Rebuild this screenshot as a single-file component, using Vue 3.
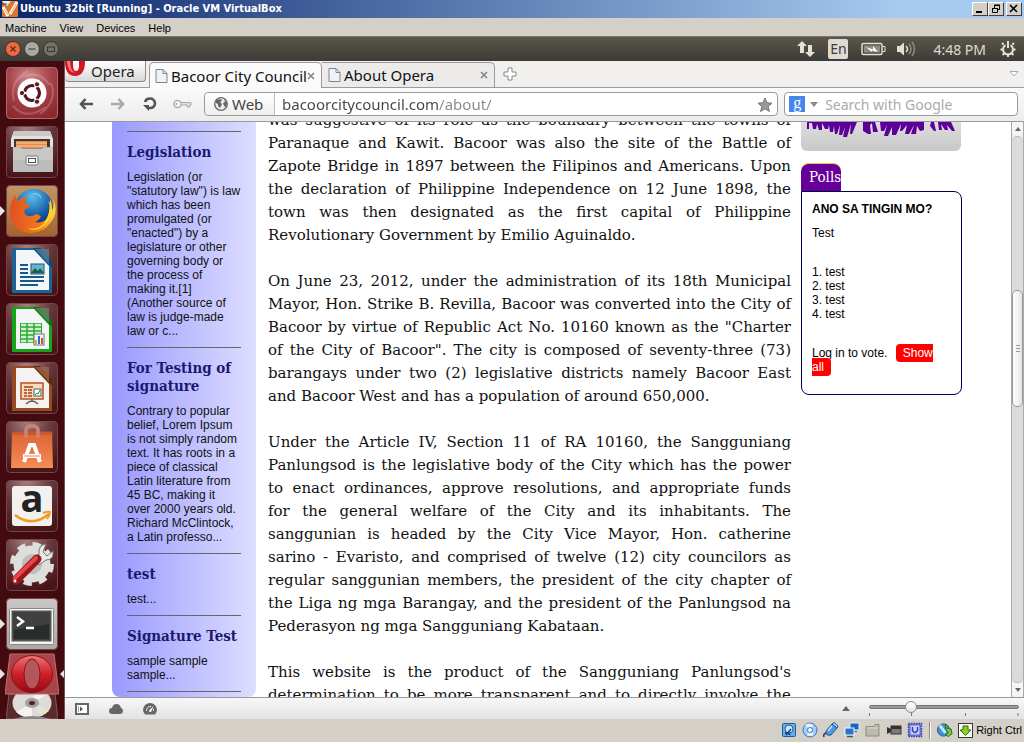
<script setup>
import { ref } from 'vue'

const address = ref('bacoorcitycouncil.com/about/')
const query = ref('')
const zoomLevel = ref(26)

const menus = ['Machine', 'View', 'Devices', 'Help']

const news = [
  {
    title: 'Legislation',
    text: 'Legislation (or "statutory law") is law which has been promulgated (or "enacted") by a legislature or other governing body or the process of making it.[1] (Another source of law is judge-made law or c...',
  },
  {
    title: 'For Testing of signature',
    text: 'Contrary to popular belief, Lorem Ipsum is not simply random text. It has roots in a piece of classical Latin literature from 45 BC, making it over 2000 years old. Richard McClintock, a Latin professo...',
  },
  { title: 'test', text: 'test...' },
  { title: 'Signature Test', text: 'sample sample sample...' },
]

const paragraphs = [
  {
    lines: [
      'was suggestive of its role as the boundary between the towns of',
      'Paranaque and Kawit. Bacoor was also the site of the Battle of',
      'Zapote Bridge in 1897 between the Filipinos and Americans. Upon',
      'the declaration of Philippine Independence on 12 June 1898, the',
      'town was then designated as the first capital of Philippine',
      'Revolutionary Government by Emilio Aguinaldo.',
    ],
  },
  {
    lines: [
      'On June 23, 2012, under the administration of its 18th Municipal',
      'Mayor, Hon. Strike B. Revilla, Bacoor was converted into the City of',
      'Bacoor by virtue of Republic Act No. 10160 known as the "Charter',
      'of the City of Bacoor". The city is composed of seventy-three (73)',
      'barangays under two (2) legislative districts namely Bacoor East',
      'and Bacoor West and has a population of around 650,000.',
    ],
  },
  {
    lines: [
      'Under the Article IV, Section 11 of RA 10160, the Sangguniang',
      'Panlungsod is the legislative body of the City which has the power',
      'to enact ordinances, approve resolutions, and appropriate funds',
      'for the general welfare of the City and its inhabitants. The',
      'sanggunian is headed by the City Vice Mayor, Hon. catherine',
      'sarino - Evaristo, and comprised of twelve (12) city councilors as',
      'regular sanggunian members, the president of the city chapter of',
      'the Liga ng mga Barangay, and the president of the Panlungsod na',
      'Pederasyon ng mga Sangguniang Kabataan.',
    ],
  },
  {
    continues: true,
    lines: [
      "This website is the product of the Sangguniang Panlungsod's",
      'determination to be more transparent and to directly involve the',
    ],
  },
]
</script>

<template>
  <div class="window">
    <header class="titlebar">
      <svg class="vb-icon" width="16" height="16" viewBox="0 0 16 16" aria-hidden="true">
        <rect width="16" height="16" rx="1" fill="#d9772c" />
        <path d="M0 0h9L5 5z" fill="#f2efe9" /><path d="M1 6l5 9M15 1L8 13" stroke="#fff" stroke-width="3" />
        <path d="M2 8l4 6M14 3l-5 9" stroke="#e8a15c" stroke-width="1" /><path d="M0 3h5" stroke="#444" />
      </svg>
      <h1>Ubuntu 32bit [Running] - Oracle VM VirtualBox</h1>
      <div class="win-buttons">
        <button aria-label="Minimize"><svg width="12" height="10"><path d="M2 8h6" stroke="#000" stroke-width="2" /></svg></button>
        <button aria-label="Restore"><svg width="12" height="10"><path d="M4.5 4V1.500h5v4H8M4 1h6M2 4.500h6M2.500 4v4.500h5V4" fill="none" stroke="#000" /></svg></button>
        <button class="close" aria-label="Close"><svg width="12" height="10"><path d="M2 1l7 7M9 1L2 8" stroke="#000" stroke-width="1.600" /></svg></button>
      </div>
    </header>

    <nav class="menubar">
      <button v-for="m in menus" :key="m">{{ m }}</button>
    </nav>

    <div class="panel">
      <div class="panel-controls">
        <button aria-label="Close window"><svg width="16" height="16" viewBox="0 0 16 16"><circle cx="8" cy="8" r="7.500" fill="#ee6a41" stroke="#3a332e" /><path d="M5.500 5.500l5 5M10.500 5.500l-5 5" stroke="#5b2a18" stroke-width="1.200" /></svg></button>
        <button aria-label="Minimize window"><svg width="16" height="16" viewBox="0 0 16 16"><circle cx="8" cy="8" r="7.500" fill="#a9a7a2" stroke="#3a3834" /><path d="M4.500 8h7" stroke="#45433f" stroke-width="1.200" /></svg></button>
        <button aria-label="Unmaximize window"><svg width="16" height="16" viewBox="0 0 16 16"><circle cx="8" cy="8" r="7.500" fill="#75726b" stroke="#3a3834" /><rect x="4.500" y="6" width="7" height="4.500" fill="none" stroke="#393733" /></svg></button>
      </div>
      <div class="indicators">
        <svg width="18" height="16" viewBox="0 0 18 16" fill="#e4e0d8"><path d="M5 0l5 5H7v7H3V5H0zM13 16l-5-5h3V4h4v7h3z" /></svg>
        <span class="lang">En</span>
        <svg class="battery" width="25" height="14" viewBox="0 0 25 14"><rect x="1" y="1.500" width="20" height="11" rx="1.500" fill="none" stroke="#e4e0d8" stroke-width="1.500" /><rect x="3" y="3.500" width="16" height="7" fill="#8f8c84" /><path d="M22 4.500h2v5h-2" fill="none" stroke="#e4e0d8" /><path d="M5 5l7 2.500V4l5 6-6-1.500v1.500z" fill="#fff" /></svg>
        <svg width="20" height="16" viewBox="0 0 20 16"><path d="M0 5h3l4-3.500v13L3 11H0z" fill="#e4e0d8" /><path d="M9 5q3 3 0 6" fill="none" stroke="#e4e0d8" stroke-width="1.500" /><path d="M12 3q4 5 0 10M15 1q5 7 0 14" fill="none" stroke="#8d8a83" stroke-width="1.500" /></svg>
        <time>4:48 PM</time>
        <svg width="16" height="16" viewBox="0 0 16 16" fill="none" stroke="#e4e0d8"><path d="M5.500 4.200a5 5 0 1 0 5 0" stroke-width="2" /><path d="M8 0v7" stroke-width="2" /><path d="M3.500 3.500L2 2M12.500 3.500L14 2M2.800 8.500H.5M13.200 8.500h2.300M4 12.500L2.500 14M12 12.500l1.500 1.500M8 14v2" stroke-width="2" /></svg>
      </div>
    </div>

    <div class="desktop">
      <aside class="launcher" aria-label="Launcher">
        <button class="tile dash" aria-label="Dash">
          <svg viewBox="0 0 52 52"><defs><radialGradient id="dashg" cx="45%" cy="20%" r="85%"><stop offset="0" stop-color="#cf8a8c" /><stop offset=".5" stop-color="#a54349" /><stop offset="1" stop-color="#8c272e" /></radialGradient></defs>
            <rect x=".5" y=".5" width="51" height="51" rx="4" fill="url(#dashg)" stroke="#b2686c" />
            <g fill="none" stroke="#f2d0d0" stroke-opacity=".25" stroke-width="2"><path d="M8 34Q3 14 22 4M45 16Q52 34 34 47M13 12Q30 0 44 18M40 40Q20 54 7 39" /></g>
            <circle cx="26" cy="26" r="14.500" fill="#fff" /><circle cx="26" cy="26" r="7.500" fill="none" stroke="#5c171c" stroke-width="3.200" />
            <path d="M26 26L12 26M26 26l7-13M26 26l7 13" stroke="#fff" stroke-width="2" />
            <g fill="#5c171c" stroke="#fff"><circle cx="16" cy="26" r="2.600" /><circle cx="31" cy="17.300" r="2.600" /><circle cx="31" cy="34.700" r="2.600" /></g>
          </svg>
        </button>
        <button class="tile" aria-label="Files">
          <svg viewBox="0 0 52 52"><path d="M8 5h36l3 8v8H5v-8z" fill="#e2e2e0" /><path d="M8 5h36l2 5H6z" fill="#c9c9c7" /><path d="M8 13h36v9H8z" fill="#4b3023" /><path d="M10 15h31v7H10z" fill="#e5894c" /><path d="M10 17h31M10 20h31" stroke="#f6d5ab" /><path d="M7 21h7l2 2h20l2-2h9v25H7z" fill="#bcbcba" /><path d="M7 22h40v12H7z" fill="#d4d4d2" opacity=".5" /><rect x="20" y="30" width="12" height="9" rx="1.500" fill="#f3f3f1" stroke="#777" /><rect x="22.500" y="32.500" width="7" height="4" fill="#fff" stroke="#555" /></svg>
        </button>
        <button class="tile firefox" aria-label="Firefox">
          <svg viewBox="0 0 52 52"><defs><radialGradient id="globe" cx="45%" cy="20%" r="80%"><stop offset="0" stop-color="#58c0e8" /><stop offset=".6" stop-color="#1a62ae" /><stop offset="1" stop-color="#0c2c68" /></radialGradient><linearGradient id="fox" x2="1"><stop offset="0" stop-color="#e2501e" /><stop offset=".65" stop-color="#f0781e" /><stop offset="1" stop-color="#ffdc3c" /></linearGradient></defs>
            <circle cx="28" cy="23" r="19" fill="url(#globe)" />
            <path d="M9 10l2 6q5-4 11-4-3 3-4 6 4 1 6 2-1 3-5 4-2 5 3 7 4 1 8-2 3 0 5 3-3 4-6 5 10 2 13-6 4-7 0-15 5 4 3 11 4-5 2-14 6 14-2 24-8 12-22 11Q8 46 5 33 2 21 9 10z" fill="url(#fox)" />
            <path d="M44 14q6 15-5 26-9 8-18 3 14 3 19-8 4-6 4-21z" fill="#ffd42e" /><path d="M27 9q6-1 8 4" fill="none" stroke="#a2dced" stroke-width="1.500" opacity=".6" />
          </svg>
          <i class="running" />
        </button>
        <button class="tile" aria-label="Writer">
          <svg viewBox="0 0 52 52"><path d="M6 4h27l13 14v31H6z" fill="#1a6499" /><path d="M27 4h7l12 13v7z" fill="#0c4b78" /><path d="M10 6h18l15 16v24H10z" fill="#f4f5f6" /><path d="M29 5l14 15V5z" fill="#5b859d" opacity=".7" /><path d="M14 21h8M14 25h8M14 29h8M14 33h24M14 37h24M14 41h18" stroke="#155a8a" stroke-width="2" /><rect x="25" y="20" width="13" height="10" fill="#62b4d8" stroke="#1d5470" /><path d="M25 29l4-5 3 3 2-3 4 5z" fill="#225d38" /></svg>
        </button>
        <button class="tile" aria-label="Calc">
          <svg viewBox="0 0 52 52"><path d="M6 4h27l13 14v31H6z" fill="#17a419" /><path d="M27 4h7l12 13v7z" fill="#176a1a" /><path d="M10 6h18l15 16v24H10z" fill="#f4f5f6" /><path d="M29 5l14 15V5z" fill="#649265" opacity=".7" /><path d="M14 20h22v20H14z" fill="#2bab31" /><path d="M15 22h20M15 26h20M15 30h20M15 34h20M15 38h20" stroke="#d3f0d2" stroke-width="2.400" /><path d="M21 20v20M28 20v20" stroke="#2bab31" stroke-width="1.500" /><rect x="28" y="31" width="10" height="11" fill="#f3f3f3" stroke="#777" /><path d="M30 41v-4" stroke="#e6a321" stroke-width="2" /><path d="M33 41v-8" stroke="#2b6bd0" stroke-width="2" /><path d="M36 41v-6" stroke="#d85329" stroke-width="2" /></svg>
        </button>
        <button class="tile" aria-label="Impress">
          <svg viewBox="0 0 52 52"><path d="M6 4h27l13 14v31H6z" fill="#984b20" /><path d="M27 4h7l12 13v7z" fill="#5e290d" /><path d="M10 6h18l15 16v24H10z" fill="#f4f3f1" /><path d="M29 5l14 15V5z" fill="#a06d4e" opacity=".7" /><rect x="15" y="21" width="22" height="16" fill="#fbd9bf" stroke="#b15421" stroke-width="1.500" /><path d="M18 25h9M18 28h3M18 31h3M18 34h3M22 28h4M22 31h4M22 34h4" stroke="#a04519" stroke-width="1.600" /><rect x="28" y="27" width="7" height="7" fill="#fff" stroke="#366f55" /><path d="M29 33l2-2 1 1 2-4" stroke="#2a8452" fill="none" /><path d="M20 42q6-6 12 0M26 37v3" stroke="#666" stroke-width="1.500" fill="none" /></svg>
        </button>
        <button class="tile" aria-label="Software Center">
          <svg viewBox="0 0 52 52"><defs><linearGradient id="bag" y2="1" x2="0"><stop stop-color="#dc6335" /><stop offset="1" stop-color="#f48d56" /></linearGradient></defs><path d="M6 11h40l1 36H5z" fill="url(#bag)" /><path d="M5 14l1-4h40l1 4z" fill="#b95330" opacity=".6" /><path d="M20 17V9q0-4 6-4t6 4v8" fill="none" stroke="#ce8473" stroke-width="3.500" /><path d="M18 41l6-17h4l6 17M17 35h18" fill="none" stroke="#fff" stroke-width="4" /><path d="M18 35h16" stroke="#f0834d" /></svg>
        </button>
        <button class="tile" aria-label="Amazon">
          <svg viewBox="0 0 52 52"><rect x="6" y="6" width="40" height="40" rx="3" fill="#f1f1f0" /><text class="amazon" x="26" y="32" text-anchor="middle">a</text><path d="M9 35q17 13 34-1" fill="none" stroke="#f49a20" stroke-width="2.600" /><path d="M37 33q5-2 7-1 0 3-3 7" fill="none" stroke="#f49a20" stroke-width="2" /></svg>
        </button>
        <button class="tile" aria-label="System Settings">
          <svg viewBox="0 0 52 52"><circle cx="26" cy="25" r="14" fill="none" stroke="#dededc" stroke-width="9" /><circle cx="26" cy="25" r="19.500" fill="none" stroke="#dededc" stroke-width="5" stroke-dasharray="8.200 7.100" /><circle cx="26" cy="25" r="10" fill="#c0bebb" /><path d="M40 5q-8 1-7 10l-5 6 5 5 7-5q8 0 7-9l-6 5-4-4z" fill="#e8e8e6" stroke="#777" /><path d="M31 20L10 41" stroke="#9e1519" stroke-width="9" stroke-linecap="round" /><path d="M30 19L9 39" stroke="#e0484a" stroke-width="4" stroke-linecap="round" /><circle cx="9" cy="42" r="1.500" fill="#eee" /></svg>
        </button>
        <button class="tile terminal" aria-label="Terminal">
          <svg viewBox="0 0 52 52"><rect x="3.500" y="10.500" width="44" height="36" rx="1" fill="#f4f4f3" stroke="#888" /><rect x="6.500" y="13.500" width="38" height="29" fill="#292c2c" stroke="#555" stroke-width="2" /><path d="M8 15h35v11L8 32z" fill="#555" opacity=".5" /><path d="M11 19l6 4.500-6 4.500M20 30h8" fill="none" stroke="#fff" stroke-width="2.400" /></svg>
          <i class="running" />
        </button>
        <button class="folded" aria-label="Opera">
          <svg width="54" height="42" viewBox="0 0 54 42"><defs><linearGradient id="op" y2="1" x2="0"><stop stop-color="#ee7774" /><stop offset=".5" stop-color="#cf2029" /><stop offset="1" stop-color="#900b12" /></linearGradient></defs><path d="M5 1h44l5 40H0z" fill="#a94448" stroke="#bd6e70" /><ellipse cx="27" cy="21" rx="20.500" ry="18.500" fill="url(#op)" stroke="#8f1118" /><ellipse cx="27" cy="21" rx="8" ry="15" fill="#b5565a" stroke="#8f1118" /></svg>
          <i class="running" /><i class="focused" />
        </button>
        <button class="disc" aria-label="Disc">
          <svg width="52" height="25" viewBox="0 0 52 25"><path d="M3 0h46l3 25H0z" fill="#5b2b2c" stroke="#825657" /><ellipse cx="26" cy="9" rx="19.500" ry="15" fill="#dddcda" /><path d="M26 9L10 18q7 6 16 6zM26 9L42 0H28z" fill="#f5f4ef" /><path d="M26 9l17 8-8 5z" fill="#e3e6cf" /><ellipse cx="26" cy="9" rx="7" ry="5" fill="#a4a09e" /><ellipse cx="26" cy="9" rx="3" ry="2" fill="#4c2327" /><path d="M7 25q19-6 38 0z" fill="#888" /></svg>
        </button>
      </aside>

      <section class="browser">
        <div class="tabstrip">
          <button class="opera-menu">
            <svg width="20" height="16" viewBox="0 0 20 16"><path d="M0 0Q0 15 10 15 20 15 20 0h-6v5q0 5-3 5T8 4V0z" fill="#d41620" /><path d="M2 0h3q0 9 5 12Q3 12 2 0z" fill="#f17b7d" /></svg>
            <span>Opera</span>
          </button>
          <div class="tab active">
            <svg class="doc" width="13" height="14" viewBox="0 0 13 14"><path d="M1 .5h7l4 4v9H1z" fill="#edf3f8" stroke="#7c8790" /><path d="M8 .5v4h4" fill="none" stroke="#7c8790" /></svg>
            <a href="#">Bacoor City Council</a>
            <button aria-label="Close tab"><svg width="8" height="8"><path d="M1 1l6 6M7 1L1 7" stroke="#888" stroke-width="1.700" /></svg></button>
          </div>
          <div class="tab">
            <svg class="doc" width="13" height="14" viewBox="0 0 13 14"><path d="M1 .5h7l4 4v9H1z" fill="#edf3f8" stroke="#7c8790" /><path d="M8 .5v4h4" fill="none" stroke="#7c8790" /></svg>
            <a href="#">About Opera</a>
            <button aria-label="Close tab"><svg width="8" height="8"><path d="M1 1l6 6M7 1L1 7" stroke="#888" stroke-width="1.700" /></svg></button>
          </div>
          <button class="plus" aria-label="New tab"><svg width="14" height="14"><path d="M5 1h4v4h4v4H9v4H5V9H1V5h4z" fill="#fff" stroke="#888" /></svg></button>
          <button class="closed-tabs" aria-label="Closed tabs"><svg width="10" height="6"><path d="M1 .5h8L5 5z" fill="#fff" stroke="#aaa" /></svg></button>
        </div>

        <div class="toolbar">
          <button aria-label="Back"><svg width="14" height="12" viewBox="0 0 14 12"><path d="M6.500 1L2 6l4.500 5M2 6h12" fill="none" stroke="#555" stroke-width="2.600" /></svg></button>
          <button aria-label="Forward"><svg width="14" height="12" viewBox="0 0 14 12"><path d="M7.500 1L12 6l-4.500 5M12 6H0" fill="none" stroke="#aaa" stroke-width="2.600" /></svg></button>
          <button aria-label="Reload"><svg width="14" height="14" viewBox="0 0 14 14"><path d="M2 5q1-3.500 5-3.500T12 6q0 4-4 5H4" fill="none" stroke="#555" stroke-width="2.600" /><path d="M0 8h6v6z" fill="#555" /></svg></button>
          <button aria-label="Passwords"><svg width="19" height="10" viewBox="0 0 19 10"><circle cx="4.500" cy="5" r="3.500" fill="#fff" stroke="#aaa" stroke-width="1.500" /><circle cx="3.500" cy="5" r="1" fill="#999" /><path d="M8 3.500h10v2.500h-1v2h-3V6H8" fill="#ddd" stroke="#aaa" /></svg></button>
          <div class="address">
            <button class="badge">
              <svg width="14" height="14" viewBox="0 0 14 14"><circle cx="7" cy="7" r="6.300" fill="#eee" stroke="#666" stroke-width="1.300" /><path d="M2 3l5-1 1 2-2 1 2 2-2 4-2-2V7L2 6zM10 2l3 4-1 4-2-1-1-3 2-1z" fill="#666" /></svg>
              Web
            </button>
            <input v-model="address" aria-label="Address" />
            <button class="star" aria-label="Bookmark"><svg width="16" height="15" viewBox="0 0 16 15"><path d="M8 1l2 4.700 5 .5-3.800 3.300 1.200 5L8 11.800 3.600 14.500l1.200-5L1 6.200l5-.5z" fill="#999" stroke="#777" /></svg></button>
          </div>
          <div class="search">
            <button aria-label="Search engine"><span class="g">g</span><svg width="8" height="5"><path d="M0 0h8L4 5z" fill="#888" /></svg></button>
            <input v-model="query" placeholder="Search with Google" aria-label="Search with Google" />
          </div>
        </div>

        <div class="viewport">
          <div class="page">
            <aside class="news">
              <article v-for="n in news" :key="n.title">
                <h2>{{ n.title }}</h2>
                <p>{{ n.text }}</p>
              </article>
            </aside>
            <main>
              <p v-for="(p, i) in paragraphs" :key="i" :class="{ continues: p.continues }">
                <span v-for="line in p.lines" :key="line">{{ line }}</span>
              </p>
            </main>
            <aside class="extras">
              <div class="banner">
                <svg width="150" height="17" viewBox="0 0 150 17"><path d="M1 0v7h2V1h3l1 6h3l1-5 2 6h3V1l3 6h3l1-4 1 7h3l1-6 1 8h2l3-9-1 10h3l3-8-2 10h4l4-13-1 10h2l5-12zM57 0v9l5 3h3l-1-9 2-2 1 9h5l-3-10zM74 0l1 9h3l3-6-3 11h4l4-9v8h4l5-11-1 7h2l5-6-2 9h4l5-9-3 9h5l1-8 3 5 4-1V0zM125 0l-1 4 4 5h2l-2-9zM132 0l1 8h3l-1-6 4 6h3l-1-5 5 6h3L145 0z" fill="#5c0099" /></svg>
              </div>
              <h2 class="polls-tab">Polls</h2>
              <section class="poll">
                <h3>ANO SA TINGIN MO?</h3>
                <p>Test</p>
                <ol><li>test</li><li>test</li><li>test</li><li>test</li></ol>
                <p class="vote">Log in to vote. <a href="#">Show all</a></p>
              </section>
            </aside>
          </div>
          <div class="scrollbar" aria-hidden="true">
            <div class="step"><svg width="6" height="4"><path d="M0 4h6L3 0z" fill="#666" /></svg></div>
            <div class="track"><div class="thumb"><svg width="4" height="7"><path d="M0 .5h4M0 3.500h4M0 6.500h4" stroke="#999" /></svg></div></div>
            <div class="step"><svg width="6" height="4"><path d="M0 0h6L3 4z" fill="#666" /></svg></div>
          </div>
        </div>

        <footer class="operabar">
          <button aria-label="Panels"><svg width="14" height="12" viewBox="0 0 14 12"><rect x="1" y="1" width="12" height="10" fill="#fff" stroke="#666" stroke-width="2" /><path d="M5 3.500v5L8 6z" fill="#555" /><path d="M3.500 3v6" stroke="#aaa" /></svg></button>
          <button aria-label="Sync"><svg width="14" height="10" viewBox="0 0 14 10"><path d="M3 10Q0 10 0 7t3-3q1-4 4.500-4T12 4q2 .5 2 3t-2.500 3z" fill="#666" /></svg></button>
          <button aria-label="Turbo"><svg width="14" height="12" viewBox="0 0 14 12"><path d="M2 11.500Q0 9 0 7a7 7 0 0 1 14 0q0 2-2 4.500z" fill="#666" /><path d="M3.500 8A4 4 0 0 1 8 3.500M10.500 8q0-2-.5-2.500" stroke="#eee" fill="none" /><path d="M10.500 3L6 7.500q0 2 2 1.500z" fill="#fff" /></svg></button>
          <div class="zoomer">
            <button aria-label="Zoom menu"><svg width="8" height="5"><path d="M0 5h8L4 0z" fill="#666" /></svg></button>
            <div class="slider">
              <input v-model="zoomLevel" type="range" min="0" max="100" aria-label="Zoom" />
              <svg class="ticks" width="100%" height="3"><path d="M.5 0v3" stroke="#777" /><rect x="28%" width="1" height="3" fill="#777" /><rect x="64%" width="1" height="3" fill="#777" /><rect x="99%" width="1" height="3" fill="#777" /></svg>
            </div>
          </div>
        </footer>
      </section>
    </div>

    <footer class="statusbar">
      <svg width="16" height="16" viewBox="0 0 14 16"><rect x=".5" y="1.500" width="13" height="13" rx="1" fill="#61aeea" stroke="#195e9c" /><circle cx="7" cy="7" r="4" fill="#d2e8fa" stroke="#1b65a6" /><path d="M4 13l5-6M3 11q4-1 5 2" stroke="#163e70" stroke-width="1.500" fill="none" /></svg>
      <svg width="16" height="16" viewBox="0 0 16 16"><circle cx="8" cy="8" r="7" fill="#9fd0f5" stroke="#3c73b5" /><path d="M8 8L3 3q4-3 8 0zM8 8l4 5q-4 2-7 0z" fill="#e3f4ff" /><circle cx="8" cy="8" r="2.500" fill="#fff" stroke="#3c73b5" /></svg>
      <svg width="16" height="16" viewBox="0 0 16 16"><path d="M1 15q-1-3 2-4" fill="none" stroke="#333" stroke-width="1.500" /><path d="M3 9l6-7 5 4-6 7q-3 1-5-1z" fill="#4c9adf" stroke="#1d528f" /><path d="M9 2l2-1.500 4 3.500-1 2z" fill="#b9d9f5" stroke="#1d528f" /><path d="M5 9l4-5" stroke="#c9e6fb" stroke-width="1.500" /></svg>
      <svg width="16" height="16" viewBox="0 0 16 16"><rect x="6" y="1" width="9" height="7" fill="#1c63bf" stroke="#e1ecf5" /><path d="M9 9.500h4" stroke="#456" /><rect x="1" y="6" width="9" height="7" fill="#2375d4" stroke="#f0f5fa" /><path d="M3 14.500h6" stroke="#456" stroke-width="1.500" /></svg>
      <svg width="16" height="16" viewBox="0 0 16 16"><path d="M1 4.500h8l1-2h4v11.500H1z" fill="#bdb9b1" stroke="#8f8c86" /><path d="M2 6h11" stroke="#ddd9d0" /></svg>
      <svg width="16" height="16" viewBox="0 0 16 16"><rect x="5" y="4" width="10" height="8" fill="#7b7b7b" stroke="#333" /><path d="M1 5l4 2v3l-4 2z" fill="#333" /><path d="M5 4h10v3H5z" fill="#333" /></svg>
      <svg width="16" height="16" viewBox="0 0 16 16"><rect x="1.500" y="1.500" width="13" height="13" fill="#7f8ad8" stroke="#303fb5" stroke-width="1.500" stroke-dasharray="1.500 1" /><rect x="3" y="3" width="10" height="10" fill="#cfd3f5" stroke="#5462c4" /><path d="M5.500 5v3.500q2.500 4 5 0V5" fill="none" stroke="#303fb5" stroke-width="1.500" /></svg>
      <i class="divider" />
      <svg width="16" height="16" viewBox="0 0 17 16"><circle cx="7" cy="8" r="6.500" fill="#3f92dd" stroke="#1a5799" /><path d="M3 3l6 8" stroke="#c9e6fb" stroke-width="3" /><path d="M9 2l3 2-2 2 5 1 1 5-4 3-3-2 3-2-3-4z" fill="#7dc742" stroke="#2b6912" /></svg>
      <svg width="15" height="15" viewBox="0 0 15 15"><rect x=".5" y=".5" width="14" height="14" fill="#fafaf7" stroke="#333" /><path d="M5 3h5v4h3l-5.500 5.500L2 7h3z" fill="#8bd024" stroke="#2f6d0c" /></svg>
      <span>Right Ctrl</span>
    </footer>
  </div>
</template>

<style>
html, body { margin: 0; height: 100%; overflow: hidden; }
#app { height: 100%; }
</style>

<style scoped>
* { box-sizing: border-box; }
button { padding: 0; border: 0; background: none; font: inherit; color: inherit; }
button svg { display: block; }
h1, h2, h3, p, ol { margin: 0; }
.window { height: 100vh; display: flex; flex-direction: column; background: #d4d0c8; font-family: "Noto Sans", "Open Sans", sans-serif; }

.titlebar { height: 18px; flex: none; display: flex; align-items: center; padding: 0 2px; background: linear-gradient(90deg, #0a246a, #a6caf0 88%); color: #fff; }
.titlebar h1 { flex: 1; margin-left: 2px; font: bold 11px/18px "DejaVu Sans Condensed", "DejaVu Sans", sans-serif; }
.win-buttons { display: flex; }
.win-buttons button { width: 16px; height: 14px; padding: 1px; background: #d4d0c8; border: 1px solid; border-color: #fff #404040 #404040 #fff; }
.win-buttons .close { margin-left: 2px; }

.menubar { height: 18px; flex: none; display: flex; gap: 13px; padding: 0 5px; font: 11px/20px "Liberation Sans", Arial, sans-serif; color: #000; }

.panel { height: 25px; flex: none; display: flex; justify-content: space-between; align-items: center; padding: 0 8px 0 5px; background: linear-gradient(#5a564c, #3d3b37); border-top: 1px solid #77746a; }
.panel-controls { display: flex; gap: 3px; }
.indicators { display: flex; align-items: center; gap: 13px; color: #dfdbd2; font-size: 14px; }
.battery { margin-right: -2px; }
.indicators time { margin: 0 1px 0 3px; }
.lang { width: 20px; height: 20px; border-radius: 2px; background: #dfdbd2; color: #3c3b37; text-align: center; font-size: 14px; line-height: 20px; }

.desktop { flex: 1; min-height: 0; display: flex; }
.launcher { width: 65px; flex: none; padding: 6px 0 0 6px; display: flex; flex-direction: column; gap: 7px; overflow: hidden; background: #430b10; border-right: 1px solid #74555a; }
.tile { position: relative; flex: none; width: 52px; height: 52px; border-radius: 5px; background: radial-gradient(circle at 40% 0, #a98183, #66383b 40%, #481619 85%); box-shadow: inset 0 0 0 1px #744649; }
.tile svg { width: 52px; height: 52px; }
.firefox { background: linear-gradient(#c3936a, #a2642d); }
.terminal { background: linear-gradient(#c9c8c6, #a9a8a5); }
.folded { position: relative; flex: none; width: 54px; height: 42px; margin: -4px 0 -8px -1px; }
.disc { flex: none; width: 52px; height: 25px; }
.running, .focused { position: absolute; left: -6px; top: 50%; margin-top: -5px; border: 5px solid transparent; border-left-color: #e8e4e2; border-right-width: 0; }
.folded .running { left: -5px; }
.focused { left: auto; right: -6px; border: 5px solid transparent; border-right-color: #e8e4e2; border-left-width: 0; }
.amazon { font: bold 38px "Open Sans", sans-serif; fill: #222; }

.browser { flex: 1; min-width: 0; display: flex; flex-direction: column; background: #fff; }
.tabstrip { height: 27px; flex: none; display: flex; align-items: flex-end; padding-right: 5px; background: #f1f0ee; border-bottom: 1px solid #9b9b9b; font-size: 15px; color: #222; }
.opera-menu { align-self: flex-start; display: flex; gap: 6px; width: 81px; height: 21px; margin-right: 3px; background: linear-gradient(#fff, #d9d9d9); border: 1px solid #888; border-top: 0; border-left: 0; border-radius: 0 0 4px 4px; line-height: 20px; }
.tab { width: 173px; height: 25px; display: flex; align-items: center; gap: 3px; padding: 0 6px; background: #ecebe9; border: 1px solid #9b9b9b; border-bottom: 0; border-left: 0; border-radius: 0 5px 0 0; }
.tab.active { height: 26px; margin-bottom: -1px; padding-left: 5px; border-left: 1px solid #9b9b9b; border-radius: 5px 5px 0 0; background: #fafafa; }
.tab a { flex: 1; white-space: nowrap; color: #111; text-decoration: none; }
.active a { margin-right: -3px; }
.plus { margin: 0 auto 6px 8px; }
.closed-tabs { margin-bottom: 10px; }

.toolbar { height: 34px; flex: none; display: flex; align-items: center; padding: 0 6px 1px 14px; background: linear-gradient(#fafafa, #ececec); border-bottom: 1px solid #999; font-size: 15px; color: #444; }
.toolbar > button { margin-right: 18px; }
.toolbar > button:nth-of-type(3) { margin-right: 16px; }
.toolbar > button:nth-of-type(4) { margin-right: 12px; }
.address, .search { display: flex; height: 24px; background: #fff; border: 1px solid #999; border-radius: 4px; }
.address { flex: 575; min-width: 0; }
.badge { width: 70px; display: flex; align-items: center; gap: 4px; padding-left: 9px; background: linear-gradient(#fff, #eee); border-right: 1px solid #bbb; border-radius: 4px 0 0 4px; }
.address input { flex: 1; min-width: 0; padding: 0 7px; border: 0; background: linear-gradient(90deg, #444 164px, #888 164px); background-clip: text; font: inherit; color: transparent; outline: 0; }
.star { padding: 0 4px; }
.search { flex: 233; min-width: 0; margin-left: 6px; font-size: 14px; }
.search button { display: flex; align-items: center; gap: 5px; padding-left: 4px; }
.g { width: 16px; height: 16px; background: #4586ee; color: #fff; font: 16px/13px "Liberation Serif", serif; }
.search input { flex: 1; min-width: 0; padding: 0 7px; border: 0; background: none; font: inherit; outline: 0; }
.search input::placeholder { color: #aaa; opacity: 1; }

.viewport { flex: 1; min-height: 0; display: flex; overflow: hidden; }
.page { flex: 1; min-width: 0; display: flex; align-items: flex-start; padding-left: 47px; overflow: hidden; }
.news { flex: none; width: 144px; padding: 9px 15px 5px; background: linear-gradient(90deg, #9999ff, #dedeff); border-radius: 0 0 8px 8px; font: 12px/14px "Liberation Sans", Arial, sans-serif; color: #111; }
.news article { padding: 11px 0 9px; border-top: 1px solid #666; }
.news article:last-child { border-bottom: 1px solid #666; }
.news h2 { margin: 0 -1px 9px 0; font: bold 15px/18px "DejaVu Serif Condensed", "DejaVu Serif", serif; color: #191970; }
main { flex: 523; min-width: 0; margin: -13px 10px 0 12px; font: 15px/23px "DejaVu Serif", serif; color: #111; text-align: justify; }
main p { margin-bottom: 23px; }
main span { display: block; text-align-last: justify; }
main p:not(.continues) span:last-child { text-align-last: left; }
.extras { flex: none; width: 161px; margin-right: 49px; font: 12px/14px "Liberation Sans", Arial, sans-serif; color: #000; }
.banner { width: 160px; height: 29px; padding-left: 5px; background: linear-gradient(#ddd, #c8c8c8); border-radius: 0 0 6px 6px; }
.polls-tab { width: 40px; height: 28px; margin-top: 12px; padding-left: 8px; background: #660099; border-top: 1px solid #f4c63c; border-radius: 8px 8px 0 0; font: 15px/26px "DejaVu Serif Condensed", "DejaVu Serif", serif; color: #fff; }
.poll { padding: 10px 10px 20px; border: 1px solid #000050; border-radius: 0 8px 8px 8px; }
.poll h3 { margin-bottom: 10px; font-size: 12px; line-height: 14px; }
.poll ol { margin: 25px 0; padding: 0; list-style: decimal inside; }
.vote a { margin-left: 5px; padding: 2px 7px; background: #f00; border-radius: 4px; color: #fff; text-decoration: none; }

.scrollbar { width: 13px; flex: none; display: flex; flex-direction: column; background: #ececea; border: 1px solid #aaa; border-top: 0; border-bottom: 0; }
.step { height: 14px; display: flex; align-items: center; justify-content: center; background: #f5f5f4; border-radius: 0 0 5px 5px; }
.track { flex: 1; background: #dcdbd9; border: 1px solid #b5b5b3; border-width: 1px 0; border-radius: 6px; padding-top: 153px; }
.thumb { height: 117px; display: flex; align-items: center; justify-content: center; background: linear-gradient(90deg, #fff, #e4e4e2); border: 1px solid #999; border-radius: 5px; }

.operabar { height: 22px; flex: none; display: flex; align-items: center; gap: 20px; padding: 0 5px 0 10px; background: linear-gradient(#f7f7f7, #e3e3e3); border-top: 1px solid #999; }
.zoomer { margin-left: auto; display: flex; align-items: center; gap: 19px; }
.slider { width: 150px; display: flex; flex-direction: column; }
.slider input { width: 100%; height: 12px; margin: 0; appearance: none; background: none; }
.slider input::-webkit-slider-runnable-track { height: 4px; background: #999; border: 1px solid #777; border-radius: 2px; }
.slider input::-webkit-slider-thumb { appearance: none; width: 12px; height: 12px; margin-top: -5px; background: linear-gradient(#fff, #e5e5e5); border: 1px solid #888; border-radius: 50%; }
.ticks { display: block; }

.statusbar { height: 25px; flex: none; display: flex; align-items: center; justify-content: flex-end; gap: 5px; padding: 0 2px 1px 0; border-bottom: 2px solid #fff; font: 11px/16px "Liberation Sans", Arial, sans-serif; color: #000; }
.divider { width: 2px; height: 17px; margin: 0 1px; background: linear-gradient(90deg, #888 50%, #fff 50%); }
.statusbar span { margin-left: -2px; }
</style>
